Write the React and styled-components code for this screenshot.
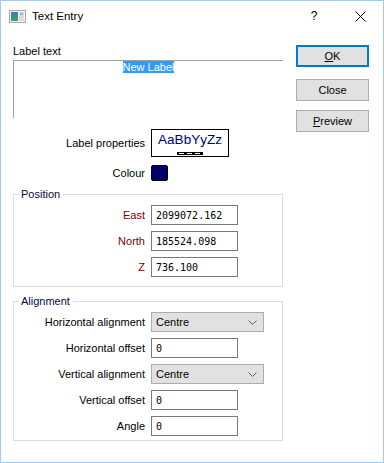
import styled, { createGlobalStyle } from "styled-components";

const GlobalStyle = createGlobalStyle`
  html, body {
    margin: 0;
    padding: 0;
    background: #ffffff;
  }
  body {
    font-family: "Liberation Sans", Arial, sans-serif;
    font-size: 11px;
    color: #000;
  }
`;

const Window = styled.div`
  width: 384px;
  height: 463px;
  box-sizing: border-box;
  border: 1px solid #a7c9ec;
  background: #fff;
  display: flex;
  flex-direction: column;
`;

const TitleBar = styled.div`
  height: 30px;
  display: flex;
  align-items: center;
  padding-left: 8px;
`;

const TitleText = styled.span`
  margin-left: 6px;
  font-size: 11.5px;
  flex: 1;
`;

const CaptionButton = styled.div`
  width: 46px;
  height: 30px;
  display: flex;
  align-items: center;
  justify-content: center;
  font-size: 12px;
`;

const Body = styled.div`
  display: flex;
  padding: 14px 0 0 12px;
  gap: 13px;
`;

const LeftColumn = styled.div`
  width: 270px;
  display: flex;
  flex-direction: column;
`;

const RightColumn = styled.div`
  width: 73px;
  display: flex;
  flex-direction: column;
`;

const Caption = styled.div`
  line-height: 13px;
  margin-bottom: 2px;
`;

const TextBox = styled.div`
  height: 58px;
  box-sizing: border-box;
  border-top: 1px solid #a0a0a0;
  border-left: 1px solid #a0a0a0;
  text-align: center;
  line-height: 13px;
`;

const Selected = styled.span`
  background: #3399ff;
  color: #fff;
`;

const PropsGrid = styled.div`
  display: grid;
  grid-template-columns: 132px auto;
  column-gap: 6px;
  row-gap: 8px;
  align-items: center;
  justify-items: start;
  margin-top: 11px;
  line-height: 13px;
`;

const RowLabel = styled.span`
  justify-self: end;
  color: ${p => (p.$red ? "#800000" : "#000")};
  line-height: 13px;
`;

const SampleBox = styled.div`
  width: 78px;
  height: 28px;
  box-sizing: border-box;
  border: 1px solid #000;
  display: flex;
  flex-direction: column;
  align-items: center;
  padding-top: 2px;
`;

const SampleText = styled.span`
  font-family: "Liberation Sans", Arial, sans-serif;
  font-size: 13.5px;
  line-height: 15px;
  color: #000080;
`;

const Swatch = styled.div`
  width: 17px;
  height: 16px;
  box-sizing: border-box;
  border: 1px solid #000;
  border-radius: 2px;
  background: #000066;
`;

const Group = styled.fieldset`
  margin: ${p => p.$top}px 0 0 0;
  padding: ${p => p.$padTop}px 0 ${p => p.$padBottom}px 0;
  border: 1px solid #dcdcdc;
  display: grid;
  grid-template-columns: 131px auto;
  column-gap: 6px;
  row-gap: 6px;
  align-items: center;
  justify-items: start;
`;

const Legend = styled.legend`
  margin-left: 5px;
  padding: 0 3px 0 2px;
  line-height: 13px;
  color: #0a0a3c;
`;

const Field = styled.input`
  width: 87px;
  height: 20px;
  box-sizing: border-box;
  border: 1px solid #7a7a7a;
  padding: 0 0 0 4px;
  margin: 0;
  font-family: "DejaVu Sans Mono", "Liberation Mono", monospace;
  font-size: 10px;
  color: #000;
  background: #fff;
  outline: none;
`;

const Select = styled.div`
  width: 113px;
  height: 20px;
  box-sizing: border-box;
  border: 1px solid #adadad;
  background: #e1e1e1;
  display: flex;
  align-items: center;
  justify-content: space-between;
  padding: 0 6px 0 4px;
`;

const Button = styled.button`
  width: 73px;
  height: 22px;
  box-sizing: border-box;
  margin: ${p => p.$top || 0}px 0 0 0;
  padding: 0;
  background: #e1e1e1;
  border: ${p => (p.$primary ? "2px solid #0078d7" : "1px solid #adadad")};
  font-family: "Liberation Sans", Arial, sans-serif;
  font-size: 11px;
  color: #000;
`;

const Chevron = () => (
  <svg width="9" height="5" viewBox="0 0 9 5">
    <path d="M0.5 0.5 L4.5 4.5 L8.5 0.5" fill="none" stroke="#606060" strokeWidth="1" />
  </svg>
);

const AppIcon = () => (
  <svg width="17" height="13" viewBox="0 0 17 13">
    <defs>
      <linearGradient id="pane" x1="0" y1="0" x2="0" y2="1">
        <stop offset="0" stopColor="#3c7fb8" />
        <stop offset="1" stopColor="#3fa06c" />
      </linearGradient>
    </defs>
    <rect x="0.5" y="0.5" width="16" height="12" fill="#f2f2f2" stroke="#a8a8a8" />
    <rect x="2" y="2" width="7" height="9" fill="url(#pane)" />
    <rect x="10" y="2" width="5" height="9" fill="#dcdcdc" />
    <rect x="11" y="3" width="3" height="2" fill="#8fb8d8" />
  </svg>
);

const FontBar = () => (
  <svg width="26" height="3" viewBox="0 0 26 3" style={{ marginTop: 5 }}>
    <rect x="0" y="0" width="26" height="3" fill="#000" />
    <path d="M2 1.5 H7 M10 1.5 H15 M18 1.5 H23" stroke="#fff" strokeWidth="1" />
  </svg>
);

export default function App() {
  return (
    <>
      <GlobalStyle />
      <Window>
        <TitleBar>
          <AppIcon />
          <TitleText>Text Entry</TitleText>
          <CaptionButton>?</CaptionButton>
          <CaptionButton>
            <svg width="11" height="11" viewBox="0 0 11 11">
              <path d="M0.5 0.5 L10.5 10.5 M10.5 0.5 L0.5 10.5" stroke="#000" strokeWidth="1" />
            </svg>
          </CaptionButton>
        </TitleBar>
        <Body>
          <LeftColumn>
            <Caption>Label text</Caption>
            <TextBox>
              <Selected>New Label</Selected>
            </TextBox>
            <PropsGrid>
              <RowLabel>Label properties</RowLabel>
              <SampleBox>
                <SampleText>AaBbYyZz</SampleText>
                <FontBar />
              </SampleBox>
              <RowLabel>Colour</RowLabel>
              <Swatch />
            </PropsGrid>
            <Group $top={7} $padTop={4} $padBottom={9}>
              <Legend>Position</Legend>
              <RowLabel $red>East</RowLabel>
              <Field readOnly value="2099072.162" />
              <RowLabel $red>North</RowLabel>
              <Field readOnly value="185524.098" />
              <RowLabel $red>Z</RowLabel>
              <Field readOnly value="736.100" />
            </Group>
            <Group $top={8} $padTop={4} $padBottom={4}>
              <Legend>Alignment</Legend>
              <RowLabel>Horizontal alignment</RowLabel>
              <Select>
                <span>Centre</span>
                <Chevron />
              </Select>
              <RowLabel>Horizontal offset</RowLabel>
              <Field readOnly value="0" />
              <RowLabel>Vertical alignment</RowLabel>
              <Select>
                <span>Centre</span>
                <Chevron />
              </Select>
              <RowLabel>Vertical offset</RowLabel>
              <Field readOnly value="0" />
              <RowLabel>Angle</RowLabel>
              <Field readOnly value="0" />
            </Group>
          </LeftColumn>
          <RightColumn>
            <Button $primary>
              <u>O</u>K
            </Button>
            <Button $top={12}>Close</Button>
            <Button $top={9}>
              <u>P</u>review
            </Button>
          </RightColumn>
        </Body>
      </Window>
    </>
  );
}
